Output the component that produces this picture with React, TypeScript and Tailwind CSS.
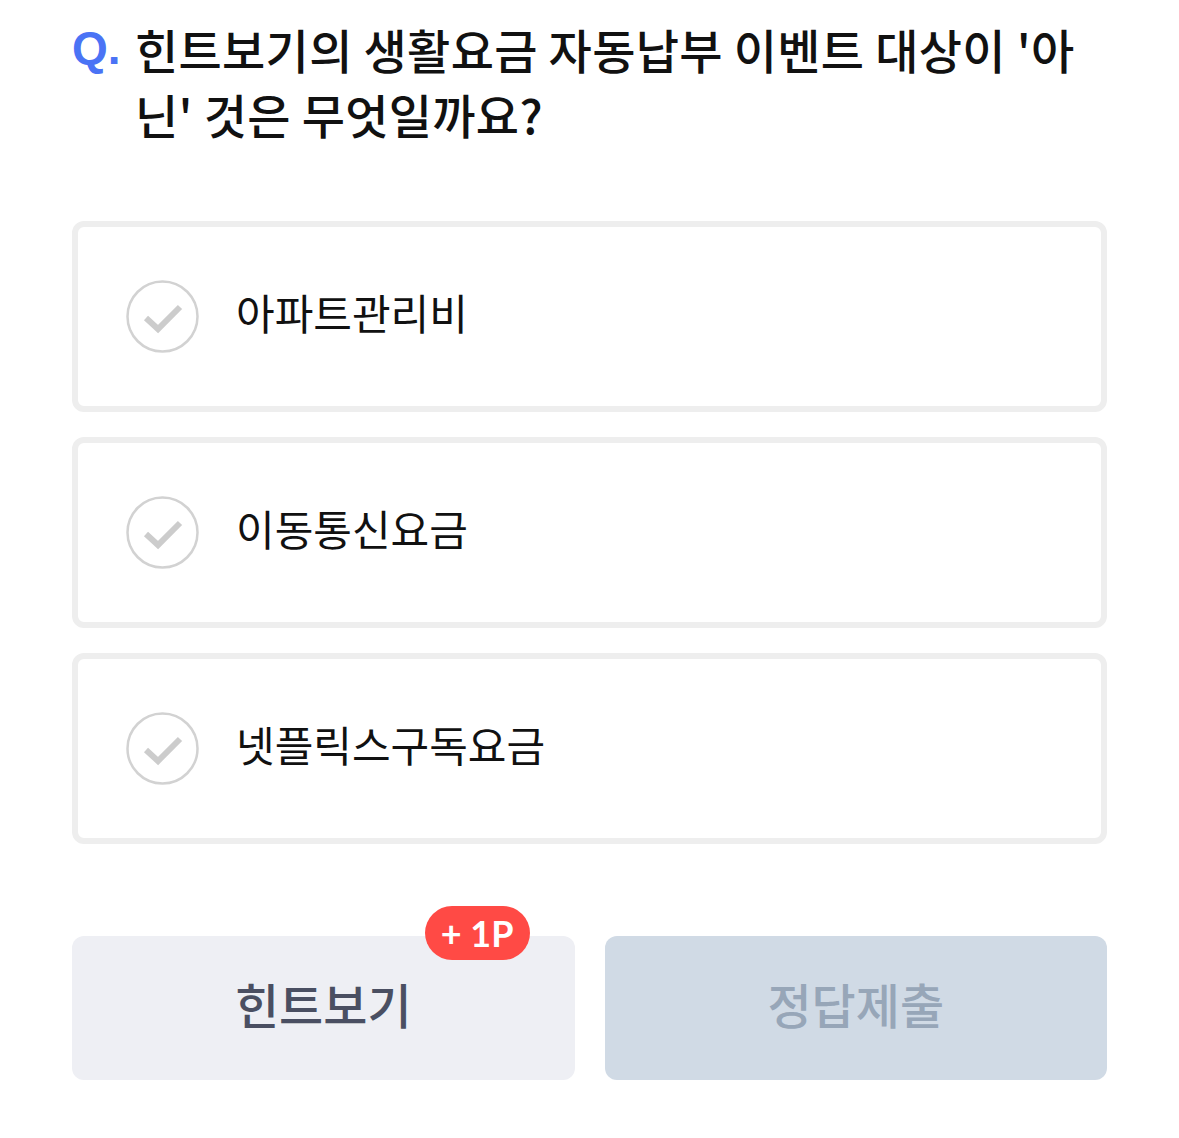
import React from "react";

const options = ["아파트관리비", "이동통신요금", "넷플릭스구독요금"];

function CheckCircle() {
  return (
    <svg width="73" height="73" viewBox="0 0 73 73" className="shrink-0">
      <circle cx="36.5" cy="36.5" r="35" fill="none" stroke="#d2d2d2" strokeWidth="2.5" />
      <path d="M20 38 L32 49 L54 27" fill="none" stroke="#cccccc" strokeWidth="6" />
    </svg>
  );
}

export default function App() {
  return (
    <div
      className="w-[1179px] h-[1138px] bg-white px-[72px] pt-[16px]"
      style={{ fontFamily: '"Noto Sans CJK KR", "Noto Sans", sans-serif' }}
    >
      {/* question */}
      <div className="flex text-[47px] leading-[65px] font-medium text-[#111]">
        <span
          className="w-[63px] shrink-0 font-bold text-[#4a73f5] text-[46px]"
          style={{ fontFamily: '"Liberation Sans", Arial, sans-serif' }}
        >
          Q.
        </span>
        <p className="tracking-[0.3px]">
          힌트보기의 생활요금 자동납부 이벤트 대상이 '아닌' 것은 무엇일까요?
        </p>
      </div>

      {/* options */}
      <div className="mt-[75px] flex flex-col gap-[25px]">
        {options.map((o) => (
          <div
            key={o}
            className="h-[191px] border-[6px] border-[#eeeeee] rounded-[12px] flex items-center pl-[48px] gap-[37px]"
          >
            <CheckCircle />
            <span className="text-[42px] text-[#111] leading-none mb-[10px]">{o}</span>
          </div>
        ))}
      </div>

      {/* buttons */}
      <div className="mt-[92px] grid grid-cols-2 gap-[30px]">
        <div className="relative h-[144px] rounded-[12px] bg-[#eeeff4] flex items-center justify-center">
          <span className="text-[48px] leading-none font-medium text-[#4a4f62] mb-[10px]">
            힌트보기
          </span>
          <span
            className="absolute top-[-30px] right-[45px] h-[54px] px-[16px] rounded-full bg-[#ff4a45] text-white text-[36px] font-bold flex items-center"
            style={{ fontFamily: 'Lato, "Noto Sans", sans-serif' }}
          >
            + 1P
          </span>
        </div>
        <div className="h-[144px] rounded-[12px] bg-[#d0dae5] flex items-center justify-center">
          <span className="text-[48px] leading-none font-medium text-[#97a6b8] mb-[10px]">
            정답제출
          </span>
        </div>
      </div>
    </div>
  );
}
